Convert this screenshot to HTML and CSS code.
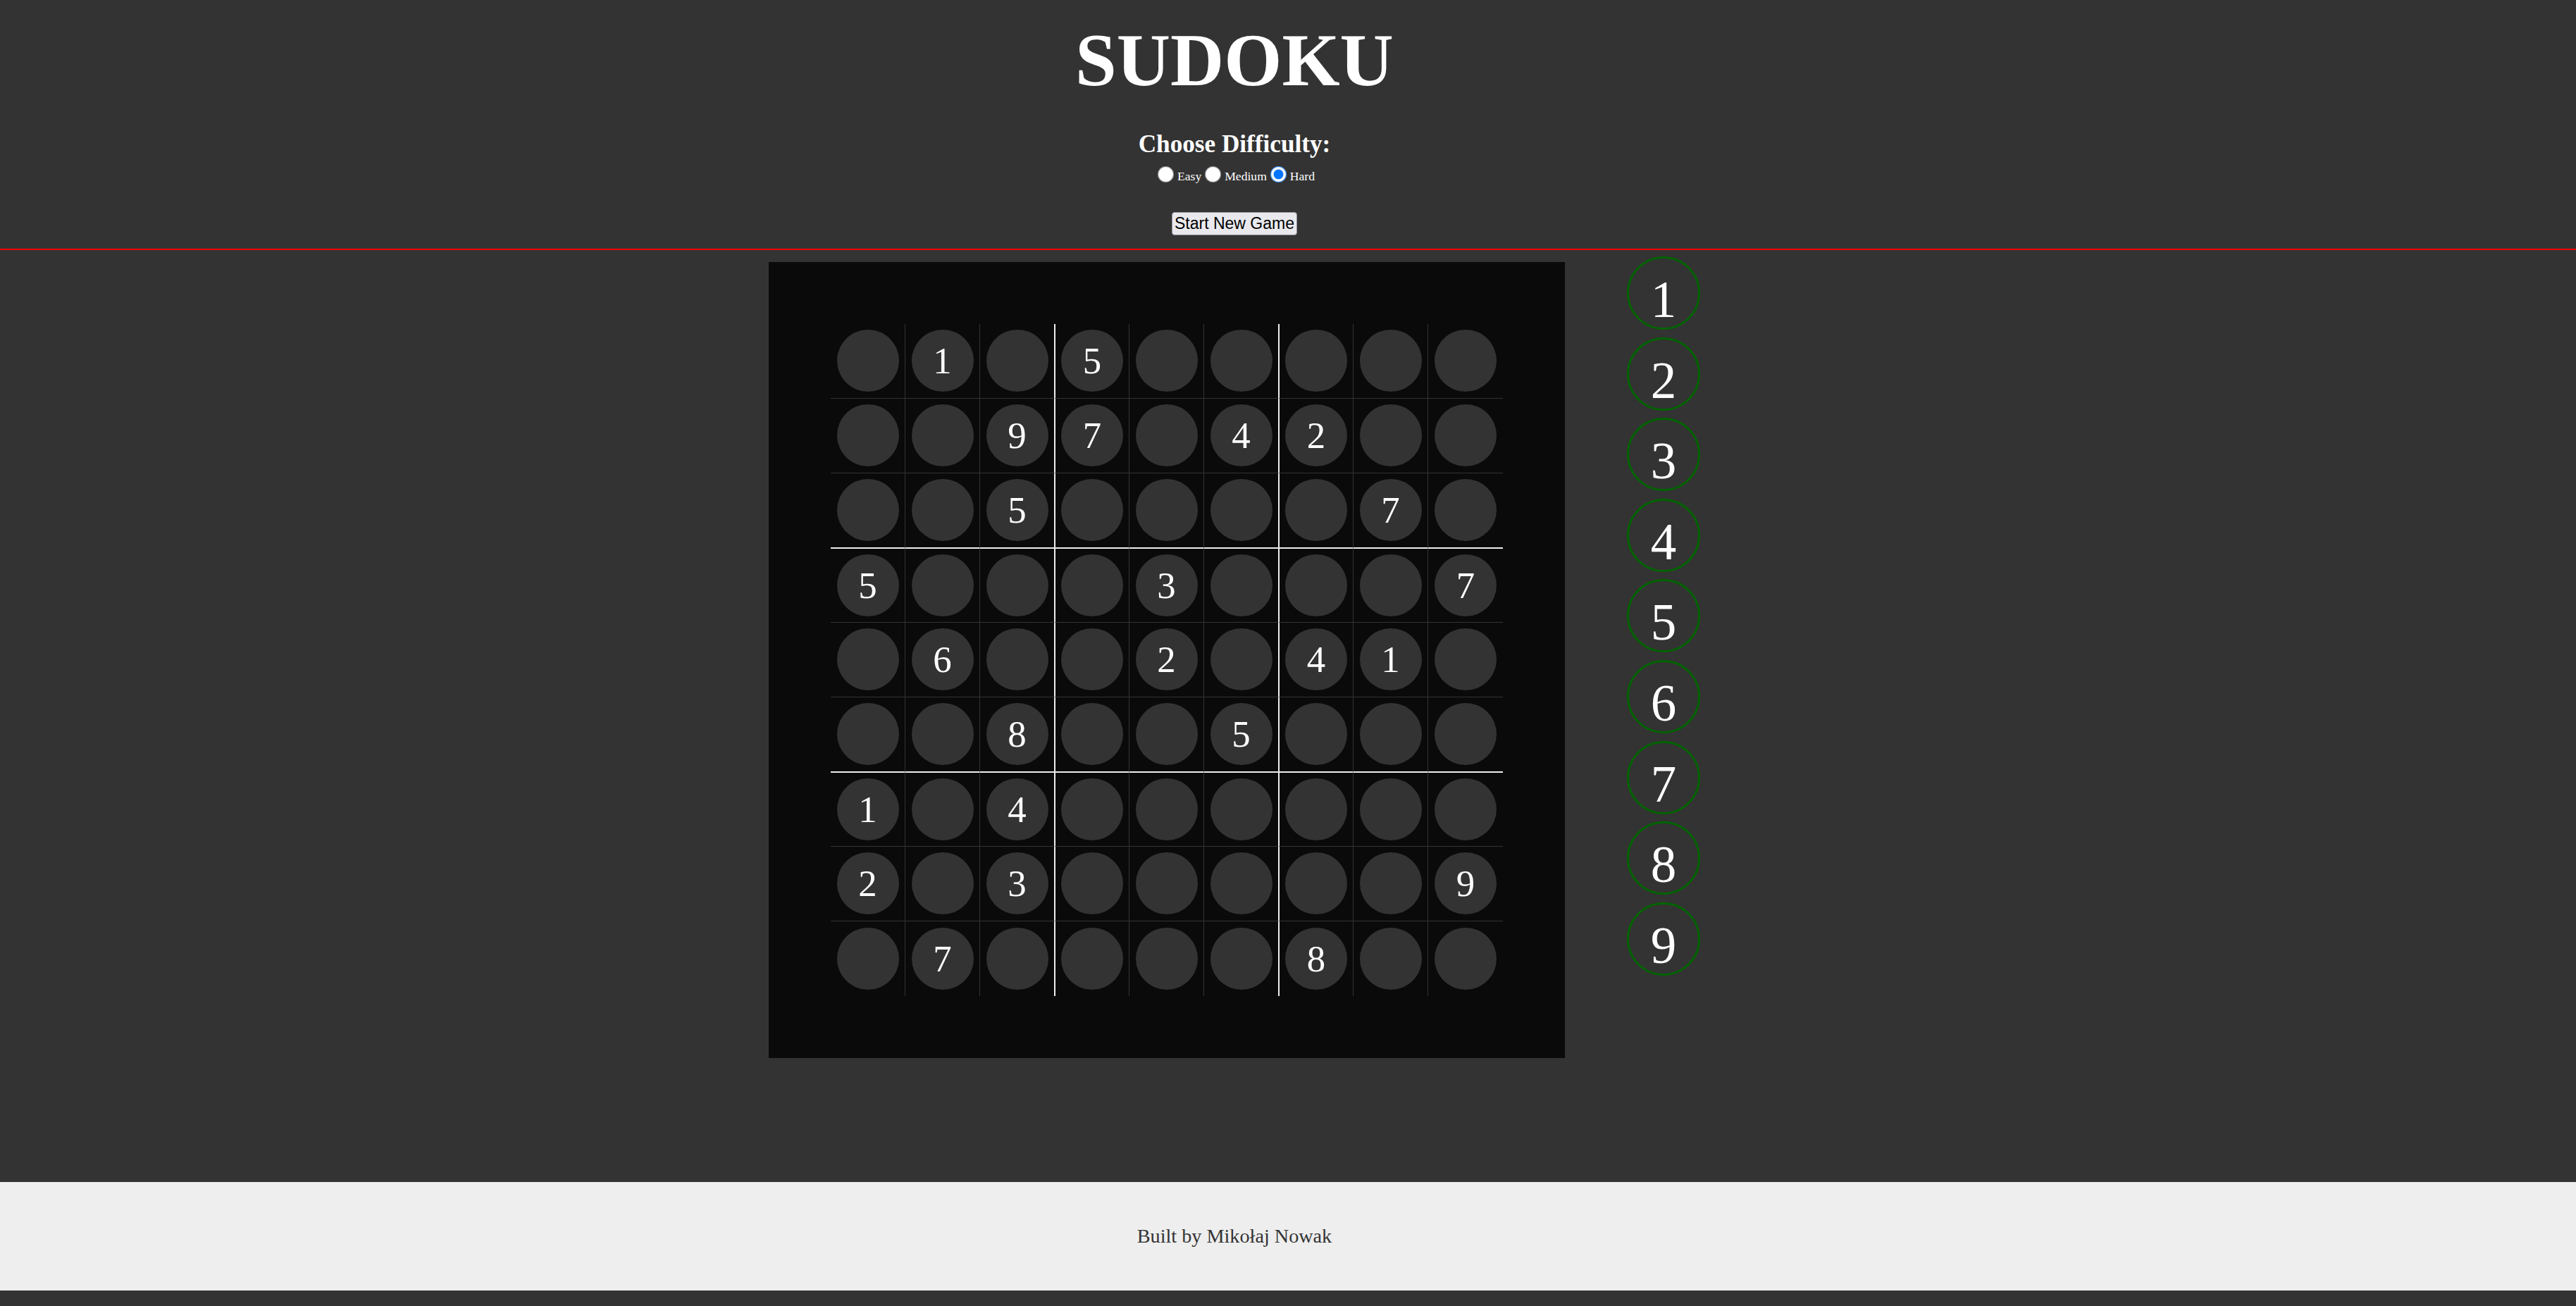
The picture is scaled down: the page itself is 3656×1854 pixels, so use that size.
FILE: index.html
```html
<!DOCTYPE html>
<html lang="en">
<head>
<meta charset="utf-8">
<title>Sudoku</title>
<link rel="stylesheet" href="styles.css">
</head>
<body>
<header class="header">
  <h1 class="title">SUDOKU</h1>
  <h3 class="subtitle">Choose Difficulty:</h3>
  <div class="difficulty">
    <input class="radio" type="radio" name="diff" id="easy"><label class="label" for="easy">Easy</label>
    <input class="radio" type="radio" name="diff" id="medium"><label class="label" for="medium">Medium</label>
    <input class="radio" type="radio" name="diff" id="hard" checked><label class="label" for="hard">Hard</label>
  </div>
  <button class="start" type="button">Start New Game</button>
</header>
<main class="main">
  <div class="board">
    <div class="grid">
      <div class="cell"><span class="dot"></span></div><div class="cell"><span class="dot">1</span></div><div class="cell"><span class="dot"></span></div><div class="cell"><span class="dot">5</span></div><div class="cell"><span class="dot"></span></div><div class="cell"><span class="dot"></span></div><div class="cell"><span class="dot"></span></div><div class="cell"><span class="dot"></span></div><div class="cell"><span class="dot"></span></div>
      <div class="cell"><span class="dot"></span></div><div class="cell"><span class="dot"></span></div><div class="cell"><span class="dot">9</span></div><div class="cell"><span class="dot">7</span></div><div class="cell"><span class="dot"></span></div><div class="cell"><span class="dot">4</span></div><div class="cell"><span class="dot">2</span></div><div class="cell"><span class="dot"></span></div><div class="cell"><span class="dot"></span></div>
      <div class="cell"><span class="dot"></span></div><div class="cell"><span class="dot"></span></div><div class="cell"><span class="dot">5</span></div><div class="cell"><span class="dot"></span></div><div class="cell"><span class="dot"></span></div><div class="cell"><span class="dot"></span></div><div class="cell"><span class="dot"></span></div><div class="cell"><span class="dot">7</span></div><div class="cell"><span class="dot"></span></div>
      <div class="cell"><span class="dot">5</span></div><div class="cell"><span class="dot"></span></div><div class="cell"><span class="dot"></span></div><div class="cell"><span class="dot"></span></div><div class="cell"><span class="dot">3</span></div><div class="cell"><span class="dot"></span></div><div class="cell"><span class="dot"></span></div><div class="cell"><span class="dot"></span></div><div class="cell"><span class="dot">7</span></div>
      <div class="cell"><span class="dot"></span></div><div class="cell"><span class="dot">6</span></div><div class="cell"><span class="dot"></span></div><div class="cell"><span class="dot"></span></div><div class="cell"><span class="dot">2</span></div><div class="cell"><span class="dot"></span></div><div class="cell"><span class="dot">4</span></div><div class="cell"><span class="dot">1</span></div><div class="cell"><span class="dot"></span></div>
      <div class="cell"><span class="dot"></span></div><div class="cell"><span class="dot"></span></div><div class="cell"><span class="dot">8</span></div><div class="cell"><span class="dot"></span></div><div class="cell"><span class="dot"></span></div><div class="cell"><span class="dot">5</span></div><div class="cell"><span class="dot"></span></div><div class="cell"><span class="dot"></span></div><div class="cell"><span class="dot"></span></div>
      <div class="cell"><span class="dot">1</span></div><div class="cell"><span class="dot"></span></div><div class="cell"><span class="dot">4</span></div><div class="cell"><span class="dot"></span></div><div class="cell"><span class="dot"></span></div><div class="cell"><span class="dot"></span></div><div class="cell"><span class="dot"></span></div><div class="cell"><span class="dot"></span></div><div class="cell"><span class="dot"></span></div>
      <div class="cell"><span class="dot">2</span></div><div class="cell"><span class="dot"></span></div><div class="cell"><span class="dot">3</span></div><div class="cell"><span class="dot"></span></div><div class="cell"><span class="dot"></span></div><div class="cell"><span class="dot"></span></div><div class="cell"><span class="dot"></span></div><div class="cell"><span class="dot"></span></div><div class="cell"><span class="dot">9</span></div>
      <div class="cell"><span class="dot"></span></div><div class="cell"><span class="dot">7</span></div><div class="cell"><span class="dot"></span></div><div class="cell"><span class="dot"></span></div><div class="cell"><span class="dot"></span></div><div class="cell"><span class="dot"></span></div><div class="cell"><span class="dot">8</span></div><div class="cell"><span class="dot"></span></div><div class="cell"><span class="dot"></span></div>
    </div>
  </div>
  <div class="numbers">
    <div class="num">1</div>
    <div class="num">2</div>
    <div class="num">3</div>
    <div class="num">4</div>
    <div class="num">5</div>
    <div class="num">6</div>
    <div class="num">7</div>
    <div class="num">8</div>
    <div class="num">9</div>
  </div>
</main>
<footer class="footer">
  <p class="credit">Built by Mikołaj Nowak</p>
</footer>
</body>
</html>
```
FILE: styles.css
```css
html, body {
  margin: 0;
  padding: 0;
}

body {
  background: #333333;
  font-family: "Liberation Serif", "Times New Roman", serif;
  color: #ffffff;
}

.header {
  display: flex;
  flex-direction: column;
  align-items: center;
  padding: 26px 152px 19px 0;
  border-bottom: 2px solid #ff0000;
}

.title {
  margin: 0;
  font-size: 105.6px;
  line-height: 120px;
  font-weight: bold;
}

.subtitle {
  margin: 38.6px 0 0;
  font-size: 35.2px;
  line-height: 40px;
  font-weight: bold;
}

.difficulty {
  margin-top: 11.4px;
  height: 24px;
  display: flex;
  align-items: center;
}

.radio {
  width: 23px;
  height: 23px;
  margin: 0 5px;
}

.label {
  font-size: 17.6px;
  line-height: 20px;
  padding-top: 4px;
}

.start {
  margin-top: 41px;
  height: 33px;
  padding: 0 3px;
  font-family: "Liberation Sans", Arial, sans-serif;
  font-size: 23px;
  color: #000000;
  background: #e9e9ed;
  border: 1px solid #8f8f9d;
  border-radius: 4px;
}

.main {
  display: flex;
  justify-content: center;
  align-items: flex-start;
  gap: 88px;
  padding: 0 152px 176px 0;
}

.board {
  margin-top: 17px;
  padding: 88px;
  background: #0a0a0a;
}

.grid {
  display: grid;
  grid-template-columns: repeat(9, 106px);
  grid-template-rows: repeat(9, 106px);
}

.cell {
  box-sizing: border-box;
  display: flex;
  align-items: center;
  justify-content: center;
  border-right: 1px solid #333333;
  border-bottom: 1px solid #333333;
}

.cell:nth-child(9n) {
  border-right: 0;
}

.cell:nth-child(n+73) {
  border-bottom: 0;
}

.cell:nth-child(9n+3),
.cell:nth-child(9n+6) {
  border-right: 1px solid #eeeeee;
}

.cell:nth-child(9n+4),
.cell:nth-child(9n+7) {
  border-left: 1px solid #eeeeee;
}

.cell:nth-child(n+19):nth-child(-n+27),
.cell:nth-child(n+46):nth-child(-n+54) {
  border-bottom: 1px solid #eeeeee;
}

.cell:nth-child(n+28):nth-child(-n+36),
.cell:nth-child(n+55):nth-child(-n+63) {
  border-top: 1px solid #eeeeee;
}

.dot {
  width: 88px;
  height: 88px;
  flex: none;
  border-radius: 50%;
  background: #333333;
  display: flex;
  align-items: center;
  justify-content: center;
  font-size: 52.8px;
  color: #ffffff;
}

.numbers {
  margin-top: 9px;
  display: flex;
  flex-direction: column;
  gap: 10.6px;
}

.num {
  box-sizing: border-box;
  width: 104px;
  height: 104px;
  padding-top: 20px;
  border: 3px solid #006400;
  border-radius: 50%;
  display: flex;
  align-items: center;
  justify-content: center;
  font-size: 73px;
  color: #ffffff;
}

.footer {
  background: #eeeeee;
  margin-bottom: 22px;
  padding: 61px 152px 61px 0;
}

.credit {
  margin: 0;
  text-align: center;
  font-size: 28.2px;
  line-height: 32px;
  color: #333333;
}
```
